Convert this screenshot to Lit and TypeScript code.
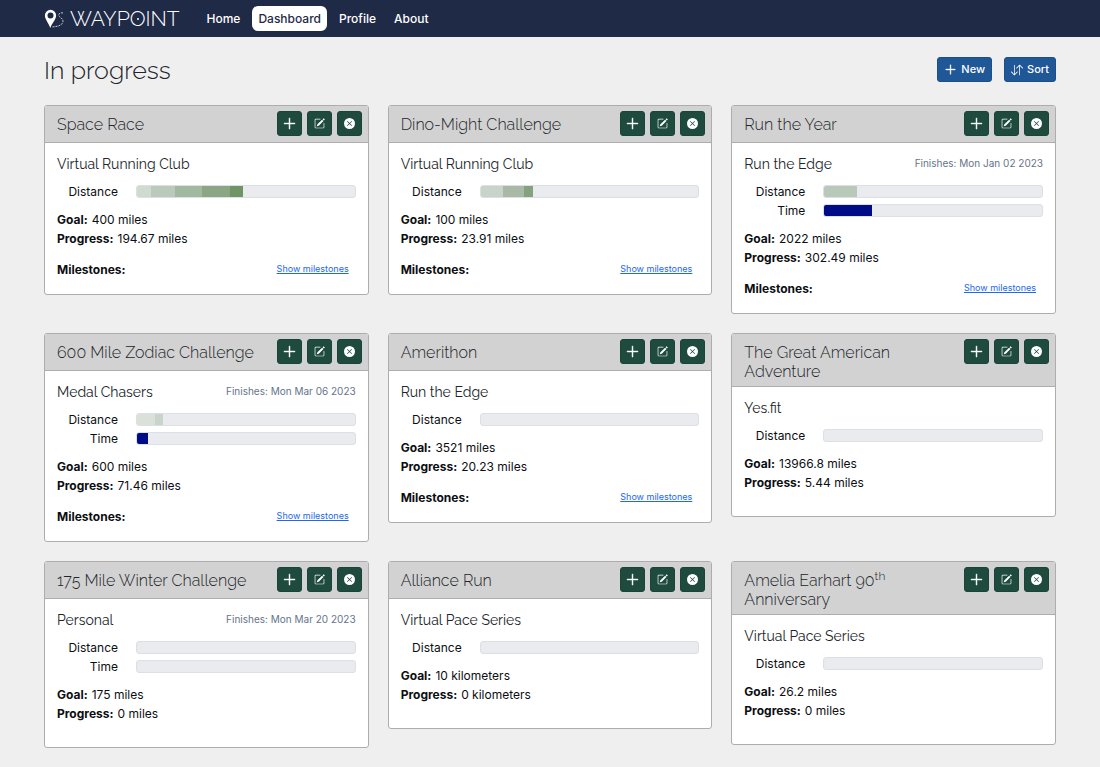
import { LitElement, html, css, svg, nothing, type TemplateResult } from "lit";
import { customElement, property } from "lit/decorators.js";
import { styleMap } from "lit/directives/style-map.js";

interface Segment {
  size: number;
  color: string;
}

interface Challenge {
  name: string | TemplateResult;
  organizer: string;
  finishes?: string;
  distance: Segment[];
  time?: number;
  goal: string;
  progress: string;
  milestones?: boolean;
}

const challenges: Challenge[] = [
  {
    name: "Space Race",
    organizer: "Virtual Running Club",
    distance: [
      { size: 6.4, color: "#cfdad1" },
      { size: 11, color: "#b9c9ba" },
      { size: 12.6, color: "#a1ba9f" },
      { size: 12.6, color: "#8ba685" },
      { size: 6, color: "#6f9565" },
    ],
    goal: "400 miles",
    progress: "194.67 miles",
    milestones: true,
  },
  {
    name: "Dino-Might Challenge",
    organizer: "Virtual Running Club",
    distance: [
      { size: 10.2, color: "#c8d3ca" },
      { size: 9.8, color: "#a8baa5" },
      { size: 3.9, color: "#84a27d" },
    ],
    goal: "100 miles",
    progress: "23.91 miles",
    milestones: true,
  },
  {
    name: "Run the Year",
    organizer: "Run the Edge",
    finishes: "Mon Jan 02 2023",
    distance: [{ size: 15, color: "#b9c9b9" }],
    time: 22,
    goal: "2022 miles",
    progress: "302.49 miles",
    milestones: true,
  },
  {
    name: "600 Mile Zodiac Challenge",
    organizer: "Medal Chasers",
    finishes: "Mon Mar 06 2023",
    distance: [
      { size: 8.4, color: "#dae0da" },
      { size: 3.5, color: "#c9d4ca" },
    ],
    time: 5,
    goal: "600 miles",
    progress: "71.46 miles",
    milestones: true,
  },
  {
    name: "Amerithon",
    organizer: "Run the Edge",
    distance: [],
    goal: "3521 miles",
    progress: "20.23 miles",
    milestones: true,
  },
  {
    name: "The Great American Adventure",
    organizer: "Yes.fit",
    distance: [],
    goal: "13966.8 miles",
    progress: "5.44 miles",
  },
  {
    name: "175 Mile Winter Challenge",
    organizer: "Personal",
    finishes: "Mon Mar 20 2023",
    distance: [],
    time: 0,
    goal: "175 miles",
    progress: "0 miles",
  },
  {
    name: "Alliance Run",
    organizer: "Virtual Pace Series",
    distance: [],
    goal: "10 kilometers",
    progress: "0 kilometers",
  },
  {
    name: html`Amelia Earhart 90<sup>th</sup> Anniversary`,
    organizer: "Virtual Pace Series",
    distance: [],
    goal: "26.2 miles",
    progress: "0 miles",
  },
];

const icon = (size: number, body: unknown) => html`
  <svg width=${size} height=${size} viewBox="0 0 16 16" fill="currentColor" aria-hidden="true">${body}</svg>
`;

const plusIcon = svg`<path fill-rule="evenodd" d="M8 2a.5.5 0 0 1 .5.5v5h5a.5.5 0 0 1 0 1h-5v5a.5.5 0 0 1-1 0v-5h-5a.5.5 0 0 1 0-1h5v-5A.5.5 0 0 1 8 2Z" stroke="currentColor" stroke-width=".5"/>`;

const editIcon = svg`
  <path d="M15.502 1.94a.5.5 0 0 1 0 .706L14.459 3.69l-2-2L13.502.646a.5.5 0 0 1 .707 0l1.293 1.293zm-1.75 2.456-2-2L4.939 9.21a.5.5 0 0 0-.121.196l-.805 2.414a.25.25 0 0 0 .316.316l2.414-.805a.5.5 0 0 0 .196-.12l6.813-6.814z"/>
  <path fill-rule="evenodd" d="M1 13.5A1.5 1.5 0 0 0 2.5 15h11a1.5 1.5 0 0 0 1.5-1.5v-6a.5.5 0 0 0-1 0v6a.5.5 0 0 1-.5.5h-11a.5.5 0 0 1-.5-.5v-11a.5.5 0 0 1 .5-.5H9a.5.5 0 0 0 0-1H2.5A1.5 1.5 0 0 0 1 2.500v11z"/>`;

const closeIcon = svg`<path d="M16 8A8 8 0 1 1 0 8a8 8 0 0 1 16 0zM5.354 4.646a.5.5 0 1 0-.708.708L7.293 8l-2.647 2.646a.5.5 0 0 0 .708.708L8 8.707l2.646 2.647a.5.5 0 0 0 .708-.708L8.707 8l2.647-2.646a.5.5 0 0 0-.708-.708L8 7.293 5.354 4.646z"/>`;

const sortIcon = svg`<path fill-rule="evenodd" d="M11.5 15a.5.5 0 0 0 .5-.5V2.707l3.146 3.147a.5.5 0 0 0 .708-.708l-4-4a.5.5 0 0 0-.708 0l-4 4a.5.5 0 1 0 .708.708L11 2.707V14.5a.5.5 0 0 0 .5.5zm-7-14a.5.5 0 0 1 .5.5v11.793l3.146-3.147a.5.5 0 0 1 .708.708l-4 4a.5.5 0 0 1-.708 0l-4-4a.5.5 0 0 1 .708-.708L4 13.293V1.5a.5.5 0 0 1 .5-.5z"/>`;

@customElement("progress-row")
export class ProgressRow extends LitElement {
  @property() label = "";
  @property({ attribute: false }) segments: Segment[] = [];

  static styles = css`
    :host {
      display: grid;
      grid-template-columns: 61px 1fr;
      column-gap: 18px;
      align-items: center;
      height: 19px;
    }
    .label {
      text-align: right;
    }
    .track {
      display: flex;
      box-sizing: border-box;
      height: 13px;
      border: 1px solid #dcdfe3;
      border-radius: 3px;
      background: #e9ebee;
      overflow: hidden;
    }
  `;

  render() {
    const total = this.segments.reduce((sum, s) => sum + s.size, 0);
    return html`
      <span class="label" id="label">${this.label}</span>
      <div
        class="track"
        role="progressbar"
        aria-labelledby="label"
        aria-valuemin="0"
        aria-valuemax="100"
        aria-valuenow=${Math.round(total)}
      >
        ${this.segments.map(
          (s) => html`<div style=${styleMap({ width: `${s.size}%`, background: s.color })}></div>`
        )}
      </div>
    `;
  }
}

@customElement("challenge-card")
export class ChallengeCard extends LitElement {
  @property({ attribute: false }) challenge!: Challenge;

  static styles = css`
    :host {
      display: block;
      border: 1px solid #adadad;
      border-radius: 3px;
      background: #fff;
      overflow: hidden;
    }
    .header {
      display: flex;
      align-items: flex-start;
      gap: 5px;
      padding: 5px 6px 5px 12px;
      border-bottom: 1px solid #adadad;
      background: #d2d2d2;
    }
    h2,
    h3 {
      margin: 0;
      font-family: Raleway, Lato, sans-serif;
      line-height: 19px;
      color: #212529;
    }
    h2 {
      flex: 1;
      padding-top: 4px;
      font-size: 16px;
      font-weight: 300;
    }
    h3 {
      font-size: 14px;
      font-weight: 400;
    }
    sup {
      font-size: 12px;
      line-height: 0;
    }
    button {
      display: grid;
      place-items: center;
      flex: none;
      width: 25px;
      height: 25px;
      margin-bottom: 1px;
      padding: 0;
      border: 1px solid #1a4437;
      border-radius: 3px;
      background: #1e4b3e;
      color: #fff;
    }
    .body {
      padding: 12px 12px 15px;
    }
    .body.short {
      padding-bottom: 24px;
    }
    .summary {
      display: flex;
      justify-content: space-between;
      margin-bottom: 8px;
    }
    .finishes {
      font-size: 10px;
      line-height: 17px;
      color: #66748a;
    }
    .figures {
      margin: 9px 0 0;
    }
    .figures div {
      display: flex;
      gap: 4px;
    }
    dt,
    .milestones strong {
      font-weight: 700;
    }
    dd {
      margin: 0;
    }
    .milestones {
      display: flex;
      justify-content: space-between;
      margin-top: 12px;
      padding-right: 7px;
    }
    a {
      font-size: 9px;
      line-height: 17px;
      color: #2068f0;
    }
  `;

  render() {
    const c = this.challenge;
    return html`
      <div class="header">
        <h2>${c.name}</h2>
        <button type="button" aria-label="Add distance">${icon(15, plusIcon)}</button>
        <button type="button" aria-label="Edit challenge">${icon(11, editIcon)}</button>
        <button type="button" aria-label="Close challenge">${icon(11, closeIcon)}</button>
      </div>
      <div class="body ${c.milestones ? "" : "short"}">
        <div class="summary">
          <h3>${c.organizer}</h3>
          ${c.finishes ? html`<span class="finishes">Finishes: ${c.finishes}</span>` : nothing}
        </div>
        <progress-row label="Distance" .segments=${c.distance}></progress-row>
        ${c.time === undefined
          ? nothing
          : html`<progress-row label="Time" .segments=${[{ size: c.time, color: "#000c85" }]}></progress-row>`}
        <dl class="figures">
          <div><dt>Goal:</dt><dd>${c.goal}</dd></div>
          <div><dt>Progress:</dt><dd>${c.progress}</dd></div>
        </dl>
        ${c.milestones
          ? html`<div class="milestones"><strong>Milestones:</strong><a href="#milestones">Show milestones</a></div>`
          : nothing}
      </div>
    `;
  }
}

@customElement("app-root")
export class AppRoot extends LitElement {
  static styles = css`
    :host {
      display: block;
      min-height: 100vh;
      background: #efefef;
      color: #0c0e12;
      font-family: Inter, sans-serif;
      font-size: 12px;
      line-height: 19px;
    }
    .navbar {
      display: flex;
      align-items: center;
      gap: 21px;
      height: 37px;
      padding: 0 4%;
      background: #1f2a47;
    }
    .brand {
      display: flex;
      align-items: center;
      gap: 6px;
      color: #fff;
      text-decoration: none;
      font-family: Raleway, Lato, sans-serif;
      font-weight: 300;
      font-size: 21px;
    }
    .target {
      position: relative;
    }
    .target::after {
      content: "";
      position: absolute;
      inset: 0;
      margin: auto;
      width: 2px;
      height: 2px;
      border-radius: 50%;
      background: #fff;
    }
    nav {
      display: flex;
      gap: 6px;
    }
    nav a {
      padding: 3px 6px;
      border-radius: 6px;
      color: #fff;
      font-weight: 500;
      text-decoration: none;
    }
    nav a.active {
      background: #fff;
      color: #1f2a47;
    }
    main {
      padding: 0 4%;
    }
    .heading {
      display: flex;
      align-items: center;
      gap: 12px;
      height: 65px;
      margin-bottom: 3px;
    }
    h1 {
      flex: 1;
      margin: 0;
      font-family: Raleway, Lato, sans-serif;
      font-weight: 300;
      font-size: 25px;
      line-height: 30px;
      color: #212529;
    }
    .heading button {
      display: flex;
      align-items: center;
      gap: 4px;
      height: 25px;
      padding: 0 6px;
      border: 1px solid #1c4f8a;
      border-radius: 3px;
      background: #1f5797;
      color: #fff;
      font: 500 11px/17px Inter, sans-serif;
    }
    .cards {
      display: grid;
      grid-template-columns: repeat(auto-fit, minmax(300px, 1fr));
      gap: 19px;
      align-items: start;
      padding-bottom: 19px;
    }
  `;

  render() {
    return html`
      <header class="navbar">
        <a class="brand" href="#home">
          <svg width="20" height="20" viewBox="0 0 20 20" fill="none" aria-hidden="true">
            <path fill="#fff" fill-rule="evenodd" d="M6.5.8A5.6 5.6 0 0 0 .9 6.400C.9 10.200 4.700 14 6.300 18.900c1.700-4.900 5.800-8.600 5.800-12.500A5.600 5.600 0 0 0 6.500.8Zm0 2.700a3 3 0 1 1 0 6 3 3 0 0 1 0-6Z" />
            <path stroke="#c5cad6" stroke-width="1" stroke-dasharray="2 1" d="M19 4c-2-.5-4.500.3-4.200 2.200.3 2.200 4.500 2.900 4.200 6.300-.3 3.500-5 5.300-11.500 5.400" />
          </svg>
          <span>WAYP<span class="target">O</span>INT</span>
        </a>
        <nav>
          <a href="#home">Home</a>
          <a class="active" href="#dashboard" aria-current="page">Dashboard</a>
          <a href="#profile">Profile</a>
          <a href="#about">About</a>
        </nav>
      </header>
      <main>
        <div class="heading">
          <h1>In progress</h1>
          <button type="button">${icon(13, plusIcon)}New</button>
          <button type="button">${icon(12, sortIcon)}Sort</button>
        </div>
        <section class="cards">
          ${challenges.map((c) => html`<challenge-card .challenge=${c}></challenge-card>`)}
        </section>
      </main>
    `;
  }
}
